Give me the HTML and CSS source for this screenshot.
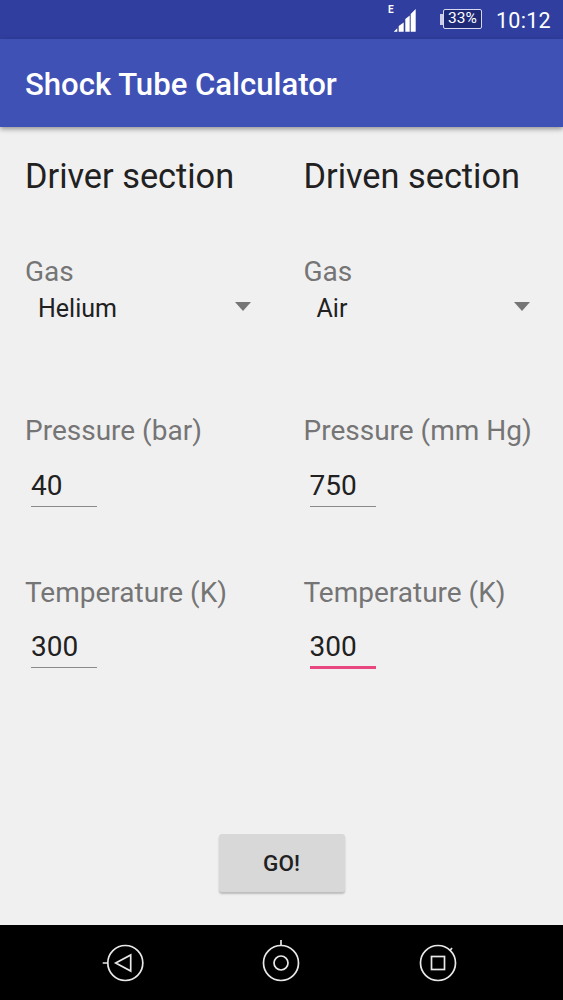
FILE: index.html
```html
<!DOCTYPE html>
<html lang="en">
<head>
<meta charset="utf-8">
<title>Shock Tube Calculator</title>
<link rel="stylesheet" href="styles.css">
</head>
<body>
<div class="phone">
  <div class="statusbar">
    <svg class="signal" width="30" height="32" viewBox="0 0 30 32">
      <text x="1" y="10" class="net">E</text>
      <path d="M6.700 28.700l3.600-3.400v3.400zM11.700 28.700V23l5-3.500v9.200zM18.300 28.700V16l4.400-3.500v16.200zM23.700 28.700V11l5-5v22.700z" fill="#fff"/>
    </svg>
    <div class="battery"><span class="nub"></span><span class="batbody">33%</span></div>
    <span class="clock">10:12</span>
  </div>
  <header class="appbar">Shock Tube Calculator</header>
  <main class="content">
    <div class="columns">
      <section class="col">
        <h2 class="title">Driver section</h2>
        <div class="label gas-label">Gas</div>
        <div class="spinner"><span>Helium</span><i class="caret"></i></div>
        <div class="label pressure-label">Pressure (bar)</div>
        <div class="field">40</div>
        <div class="label temp-label">Temperature (K)</div>
        <div class="field">300</div>
      </section>
      <section class="col">
        <h2 class="title">Driven section</h2>
        <div class="label gas-label">Gas</div>
        <div class="spinner"><span>Air</span><i class="caret"></i></div>
        <div class="label pressure-label">Pressure (mm Hg)</div>
        <div class="field">750</div>
        <div class="label temp-label">Temperature (K)</div>
        <div class="field focused">300</div>
      </section>
    </div>
    <div class="actions"><button class="go">GO!</button></div>
  </main>
  <nav class="navbar">
    <svg class="navicon" width="44" height="44" viewBox="0 0 44 44"><circle cx="24.300" cy="22" r="17.500"/><path d="M1.700 22h5.300M29.700 14v16L14.700 22z"/></svg>
    <svg class="navicon" width="44" height="44" viewBox="0 0 44 44"><circle cx="22" cy="22" r="17.500"/><circle cx="22" cy="22" r="7"/><path d="M22 -1v5.500"/></svg>
    <svg class="navicon" width="44" height="44" viewBox="0 0 44 44"><circle cx="22" cy="22" r="17.500"/><rect x="15.500" y="15.500" width="13" height="13"/><path d="M36 7l-2 2.500"/></svg>
  </nav>
</div>
</body>
</html>
```
FILE: styles.css
```css
* { box-sizing: border-box; }
html, body { margin: 0; padding: 0; }
body { font-family: Roboto, "Liberation Sans", sans-serif; background: #f1f0f1; }
.phone { width: 563px; height: 1000px; display: flex; flex-direction: column; overflow: hidden; }
.statusbar { height: 39px; flex: none; background: #303f9f; color: #fff; display: flex; align-items: flex-start; padding: 3px 12px 0 0; justify-content: flex-end; }
.signal { margin-right: 23px; }
.net { font: bold 10px Roboto, sans-serif; fill: #fff; }
.battery { display: flex; align-items: center; margin: 6px 14px 0 0; }
.nub { width: 3px; height: 11px; background: #c9cdea; }
.batbody { width: 39px; height: 20px; border: 1.500px solid #d5d8ef; border-radius: 2px; background: #1e2a78; font-size: 15.500px; line-height: 17px; text-align: center; }
.clock { font-size: 21.500px; line-height: 30px; margin-top: 3px; letter-spacing: .3px; }
.appbar { height: 88px; flex: none; background: #3f51b5; color: #fff; font-size: 31.100px; font-weight: 500; line-height: 92px; padding-left: 25px; box-shadow: 0 2px 5px rgba(0,0,0,.4); position: relative; }
.content { flex: 1; display: flex; flex-direction: column; padding: 0 0 33px; }
.columns { flex: 1; display: grid; grid-template-columns: 278.500px 1fr; padding-left: 25px; }
.title { margin: 29px 0 0; font-size: 34.300px; font-weight: 400; line-height: 40px; color: #212121; }
.label { font-size: 28px; line-height: 32px; color: #757575; }
.gas-label { margin-top: 60px; }
.spinner { height: 37px; width: 226px; padding: 3px 0 0 13px; display: flex; justify-content: space-between; align-items: center; font-size: 25px; color: #212121; }
.caret { width: 0; height: 0; border: 8px solid transparent; border-top: 9px solid #757575; border-bottom: 0; margin-top: -3px; }
.pressure-label { margin-top: 90px; }
.temp-label { margin-top: 70px; }
.field { width: 66px; height: 42px; margin: 18px 0 0 6px; border-bottom: 1.500px solid #8a8a8a; font-size: 28px; line-height: 42px; color: #212121; }
.temp-label + .field { margin-top: 17px; }
.focused { border-bottom: 3px solid #e8487f; height: 43px; }
.actions { display: flex; justify-content: center; }
.go { width: 126px; height: 58px; border: 0; border-radius: 3px; background: #d8d8d8; color: #212121; font: 500 22.500px Roboto, sans-serif; box-shadow: 0 2px 2px rgba(0,0,0,.22); }
.navbar { height: 75px; flex: none; background: #000; display: flex; padding: 16px 103px 0 101px; justify-content: space-between; }
.navicon { fill: none; stroke: #e8e8e8; stroke-width: 1.700; overflow: visible; }
```
